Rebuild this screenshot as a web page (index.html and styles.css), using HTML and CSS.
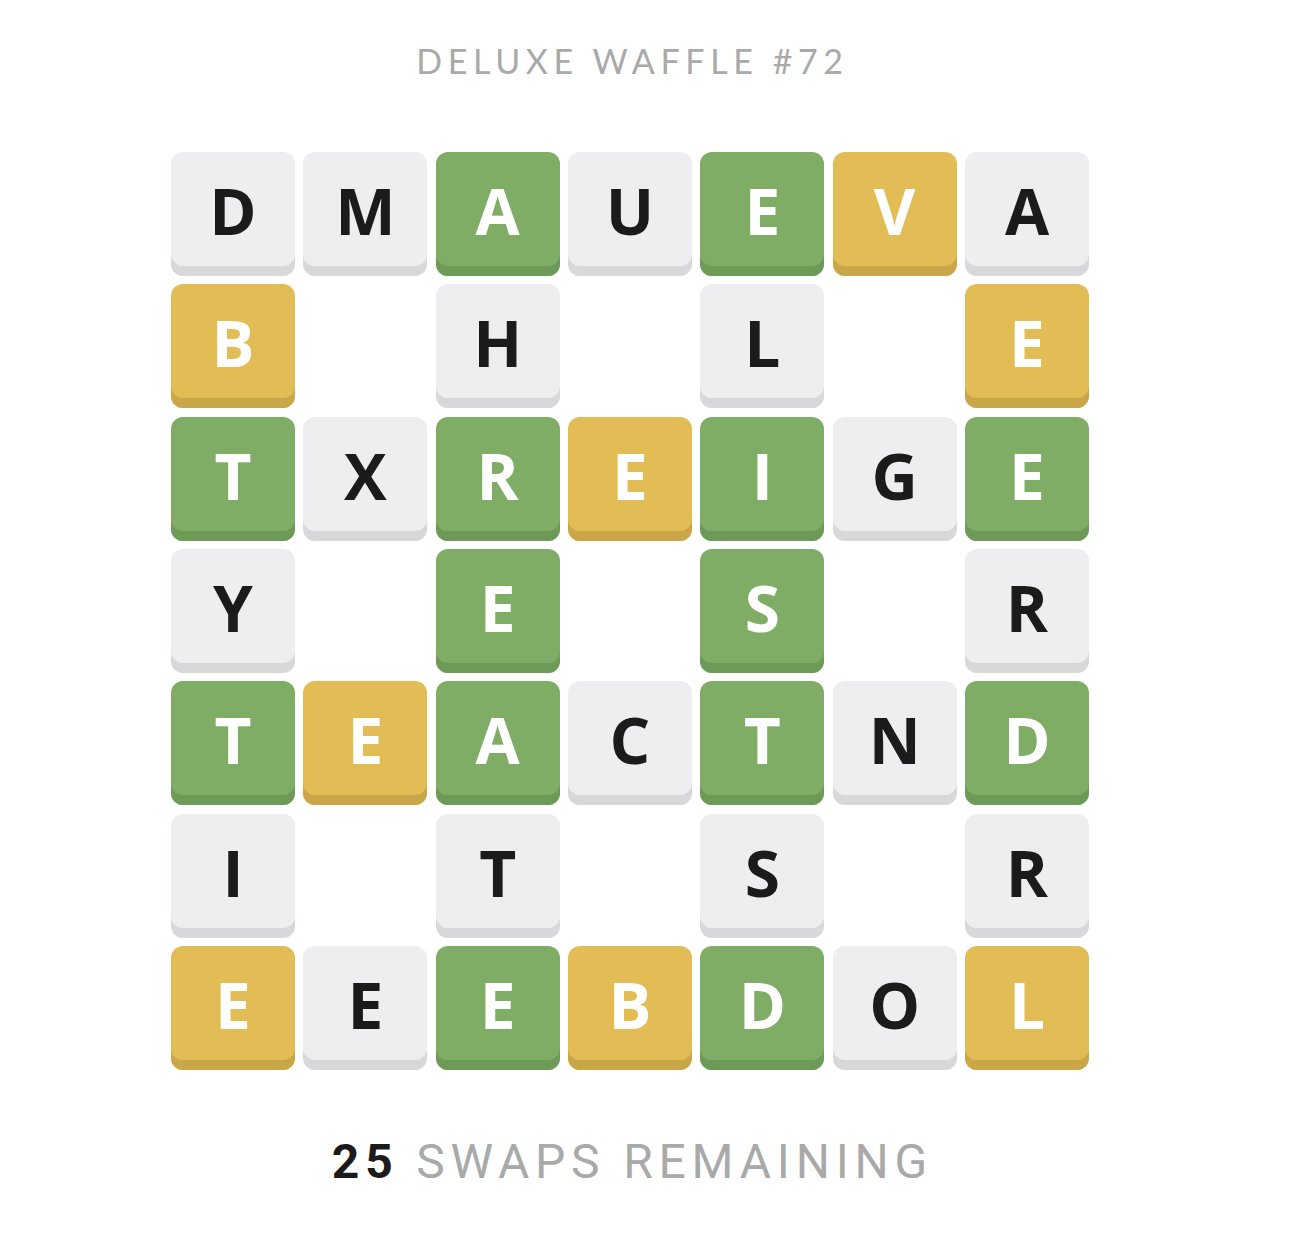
FILE: index.html
```html
<!DOCTYPE html>
<html>
<head>
<meta charset="utf-8">
<link rel="stylesheet" href="styles.css">
</head>
<body>
<div class="page">
  <h1 class="title">DELUXE WAFFLE #72</h1>
  <div class="board">
    <div class="tile gray">D</div><div class="tile gray">M</div><div class="tile green">A</div><div class="tile gray">U</div><div class="tile green">E</div><div class="tile yellow">V</div><div class="tile gray">A</div>
    <div class="tile yellow">B</div><div class="hole"></div><div class="tile gray">H</div><div class="hole"></div><div class="tile gray">L</div><div class="hole"></div><div class="tile yellow">E</div>
    <div class="tile green">T</div><div class="tile gray">X</div><div class="tile green">R</div><div class="tile yellow">E</div><div class="tile green">I</div><div class="tile gray">G</div><div class="tile green">E</div>
    <div class="tile gray">Y</div><div class="hole"></div><div class="tile green">E</div><div class="hole"></div><div class="tile green">S</div><div class="hole"></div><div class="tile gray">R</div>
    <div class="tile green">T</div><div class="tile yellow">E</div><div class="tile green">A</div><div class="tile gray">C</div><div class="tile green">T</div><div class="tile gray">N</div><div class="tile green">D</div>
    <div class="tile gray">I</div><div class="hole"></div><div class="tile gray">T</div><div class="hole"></div><div class="tile gray">S</div><div class="hole"></div><div class="tile gray">R</div>
    <div class="tile yellow">E</div><div class="tile gray">E</div><div class="tile green">E</div><div class="tile yellow">B</div><div class="tile green">D</div><div class="tile gray">O</div><div class="tile yellow">L</div>
  </div>
  <div class="swaps"><span class="count">25</span> SWAPS REMAINING</div>
</div>
</body>
</html>
```
FILE: styles.css
```css
html, body {
  margin: 0;
  padding: 0;
  background: #ffffff;
}
.page {
  width: 1260px;
  padding-top: 41px;
  display: flex;
  flex-direction: column;
  align-items: center;
}
.title {
  margin: 0;
  font-family: "Lato", "Open Sans", sans-serif;
  font-weight: 400;
  font-size: 34px;
  line-height: 40px;
  letter-spacing: 5.6px;
  color: #a9a9a9;
  padding-left: 5px;
}
.board {
  margin-top: 71px;
  display: grid;
  grid-template-columns: repeat(7, 124px);
  grid-auto-rows: 124px;
  gap: 8.33px;
}
.tile {
  border-radius: 12px;
  display: flex;
  align-items: center;
  justify-content: center;
  padding-bottom: 6px;
  box-sizing: border-box;
  font-family: "Open Sans", "Lato", sans-serif;
  font-weight: 700;
  font-size: 64px;
  line-height: 1;
}
.gray {
  background: #edeef0;
  box-shadow: inset 0 -10px 0 #d8d8da;
  color: #1b1b1b;
}
.green {
  background: #7fad65;
  box-shadow: inset 0 -10px 0 #6d9b57;
  color: #ffffff;
}
.yellow {
  background: #e2bc54;
  box-shadow: inset 0 -10px 0 #c9a749;
  color: #ffffff;
}
.swaps {
  margin-top: 64px;
  font-family: "Roboto", "Liberation Sans", sans-serif;
  font-weight: 400;
  font-size: 48px;
  line-height: 56px;
  letter-spacing: 5.8px;
  color: #a9a9a9;
  padding-left: 5px;
}
.count {
  color: #1b1b1b;
  font-weight: 700;
}
```
